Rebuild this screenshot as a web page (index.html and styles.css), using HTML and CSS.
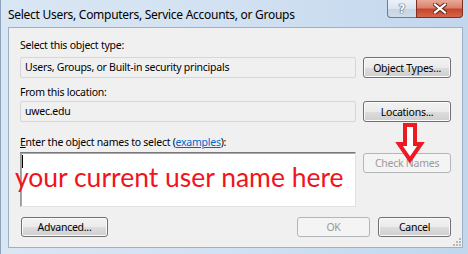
FILE: index.html
```html
<!DOCTYPE html>
<html lang="en">
<head>
    <meta charset="UTF-8">
    <title>Select Users, Computers, Service Accounts, or Groups</title>
    <link rel="stylesheet" href="styles.css">
</head>
<body>
    <div class="window">
        <!-- Barra de título -->
        <div class="titlebar">
            <span class="title">Select Users, Computers, Service Accounts, or Groups</span>
            <div class="caption-buttons">
                <span class="cap-btn help">?</span>
                <span class="cap-btn close">
                    <svg width="14" height="11" viewBox="0 0 14 11">
                        <path d="M2 1.5 L12 9.5 M12 1.5 L2 9.5" stroke="#5a2a20" stroke-width="4.2" stroke-linecap="square"/>
                        <path d="M2 1.5 L12 9.5 M12 1.5 L2 9.5" stroke="#fff" stroke-width="2.2" stroke-linecap="square"/>
                    </svg>
                </span>
            </div>
        </div>

        <div class="client">
            <!-- Tipo de objeto -->
            <div class="label label-first">Select this object type:</div>
            <div class="row row-first">
                <div class="field">Users, Groups, or Built-in security principals</div>
                <button class="button">Object Types...</button>
            </div>

            <!-- Local -->
            <div class="label label-second">From this location:</div>
            <div class="row row-second">
                <div class="field">uwec.edu</div>
                <button class="button">Locations...</button>
            </div>

            <!-- Nomes -->
            <div class="label label-third"><u>E</u>nter the object names to select (<a href="#" class="link">examples</a>):</div>
            <div class="row row-names">
                <div class="names-box">
                    <span class="caret"></span>
                    <span class="hint">your current user name here</span>
                </div>
                <button class="button button-check" disabled>Check Names</button>
            </div>

            <!-- Botões -->
            <div class="footer">
                <button class="button button-advanced">Advanced...</button>
                <div class="footer-right">
                    <button class="button button-small" disabled>OK</button>
                    <button class="button button-small">Cancel</button>
                </div>
            </div>

            <svg class="arrow" width="32" height="46" viewBox="0 0 32 46">
                <path d="M10 5 L20 5 L20 24 L26 24 L15 40 L4 24 L10 24 Z" fill="#fff" stroke="#ec1a22" stroke-width="4" stroke-linejoin="miter"/>
            </svg>

            <svg class="grip" width="10" height="10" viewBox="0 0 10 10">
                <g fill="#b8b8b8">
                    <rect x="7" y="1" width="2" height="2"/>
                    <rect x="4" y="4" width="2" height="2"/>
                    <rect x="7" y="4" width="2" height="2"/>
                    <rect x="1" y="7" width="2" height="2"/>
                    <rect x="4" y="7" width="2" height="2"/>
                    <rect x="7" y="7" width="2" height="2"/>
                </g>
            </svg>
        </div>
    </div>
</body>
</html>
```

FILE: styles.css
```css
* {
    box-sizing: border-box;
    margin: 0;
    padding: 0;
}
body {
    width: 468px;
    height: 254px;
    overflow: hidden;
    font-family: 'Noto Sans', sans-serif;
    font-size: 10.5px;
    letter-spacing: -0.25px;
    color: #000;
}
.window {
    width: 468px;
    height: 254px;
    padding: 0 5px 6px 7px;
    background: linear-gradient(90deg, #d9e6f3 0%, #d3e2f2 45%, #c2d6ec 100%);
    border-left: 1px solid #8ea3ba;
    display: flex;
    flex-direction: column;
}
.titlebar {
    height: 27px;
    display: flex;
    align-items: flex-start;
    justify-content: space-between;
}
.title {
    font-size: 12px;
    margin-top: 6px;
    letter-spacing: -0.28px;
    white-space: nowrap;
}
.caption-buttons {
    display: flex;
}
.cap-btn {
    height: 18px;
    display: flex;
    align-items: center;
    justify-content: center;
    border: 1px solid #6d7c90;
    border-top: none;
}
.help {
    width: 29px;
    border-right: none;
    border-bottom-left-radius: 4px;
    background: linear-gradient(#eaf1f8 0%, #dbe5f0 50%, #c5d3e3 51%, #cfdcea 100%);
    color: #fff;
    font-family: 'DejaVu Sans', sans-serif;
    font-weight: bold;
    font-size: 12px;
    letter-spacing: 0;
    text-shadow: 0 0 1px #3c4c60, 0 0 1px #3c4c60, 0 0 1px #3c4c60;
}
.close {
    width: 47px;
    border-bottom-right-radius: 4px;
    border-color: #7e2e22;
    background: linear-gradient(#e9a996 0%, #d9826d 45%, #c7452b 55%, #d5664a 100%);
}
.client {
    flex: 1;
    position: relative;
    background-color: #f0f0f0;
    border: 1px solid #9eb0c6;
    padding: 10px 11px 0 11px;
}
.label {
    height: 15px;
    line-height: 15px;
    white-space: nowrap;
}
.label-second {
    margin-top: 7px;
}
.label-third {
    margin-top: 13px;
}
.link {
    color: #0066cc;
}
.row {
    display: flex;
    align-items: flex-start;
    gap: 7px;
}
.row-first {
    margin-top: 4px;
}
.row-second {
    margin-top: 1px;
}
.row-names {
    margin-top: 2px;
}
.field {
    width: 337px;
    height: 21px;
    line-height: 19px;
    padding-left: 4px;
    border: 1px solid #d6d6d6;
    border-radius: 2px;
    background-color: #f0f0f0;
}
.button {
    width: 88px;
    height: 21px;
    font-family: 'Noto Sans', sans-serif;
    font-size: 10.5px;
    letter-spacing: -0.25px;
    color: #000;
    border: 1px solid #707070;
    border-radius: 3px;
    background: linear-gradient(#f2f2f2 0%, #ebebeb 50%, #dddddd 51%, #cfcfcf 100%);
    box-shadow: inset 0 0 0 1px #fbfbfb;
    cursor: pointer;
}
.button:disabled {
    color: #9a9a9a;
    border-color: #b3b6b9;
    background: #f4f4f4;
    box-shadow: none;
    cursor: default;
}
.names-box {
    position: relative;
    width: 337px;
    height: 55px;
    background-color: #fff;
    border: 1px solid;
    border-color: #7a7a7a #e2e2e2 #e2e2e2 #9a9a9a;
    box-shadow: inset 1px 1px 0 #a8a8a8;
}
.caret {
    position: absolute;
    left: 1px;
    top: 2px;
    width: 1px;
    height: 13px;
    background-color: #000;
}
.hint {
    position: absolute;
    left: -6px;
    top: 8px;
    font-family: 'Lato', sans-serif;
    font-size: 26.5px;
    letter-spacing: 0;
    line-height: 32px;
    color: #f0141e;
    white-space: nowrap;
}
.button-check {
    margin-top: 1px;
    height: 20px;
}
.footer {
    margin-top: 10px;
    display: flex;
    justify-content: space-between;
}
.button-advanced {
    width: 87px;
    height: 20px;
    margin-left: 1px;
}
.footer-right {
    display: flex;
    gap: 8px;
}
.button-small {
    width: 73px;
    height: 20px;
}
.arrow {
    position: absolute;
    left: 386px;
    top: 92px;
}
.grip {
    position: absolute;
    right: 0;
    bottom: 0;
}
```
